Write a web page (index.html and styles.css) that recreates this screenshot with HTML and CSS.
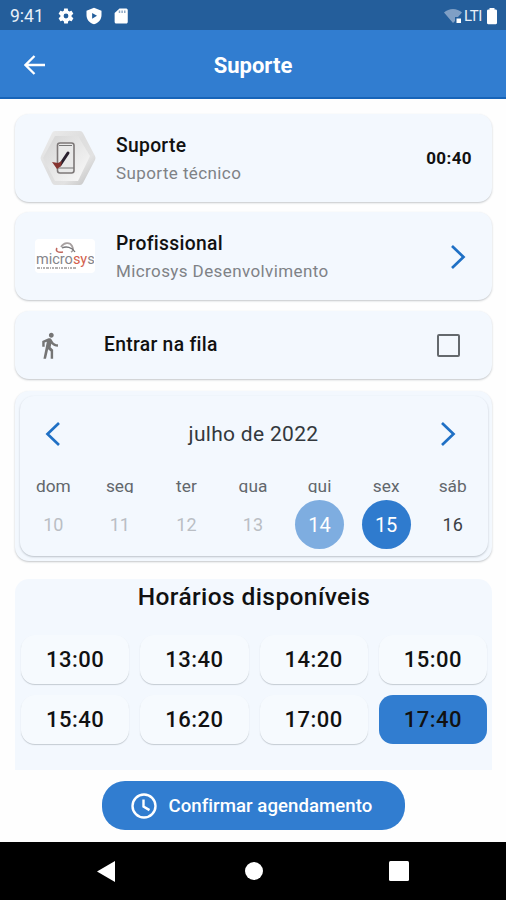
FILE: index.html
```
<!DOCTYPE html>
<html lang="pt-BR">
<head>
    <meta charset="UTF-8">
    <meta name="viewport" content="width=device-width, initial-scale=1.0">
    <title>Suporte</title>
    <link rel="stylesheet" href="styles.css">
</head>
<body>

    <div class="status-bar">
        <span class="clock">9:41</span>
        <svg class="status-icon" width="18" height="18" viewBox="0 0 24 24"><path fill="#fff" fill-rule="evenodd" d="M19.4 13c0-.3.1-.6.1-1s0-.7-.1-1l2.1-1.6c.2-.2.2-.4.1-.6l-2-3.5c-.1-.2-.4-.3-.6-.2l-2.500 1c-.5-.4-1.100-.7-1.700-1L14.400 2.400c0-.2-.2-.4-.5-.4h-4c-.2 0-.4.200-.5.400L9.100 5.100c-.6.200-1.200.600-1.700 1l-2.500-1c-.2-.1-.5 0-.6.200l-2 3.500c-.1.200-.1.500.1.600L4.500 11c0 .3-.1.600-.1 1s0 .7.1 1l-2.100 1.600c-.2.200-.2.400-.1.600l2 3.500c.1.200.4.300.6.200l2.500-1c.5.400 1.100.7 1.700 1l.4 2.700c0 .2.200.4.500.4h4c.2 0 .4-.2.500-.4l.4-2.700c.6-.2 1.200-.6 1.700-1l2.500 1c.2.100.5 0 .6-.2l2-3.500c.1-.2.100-.5-.1-.6L19.400 13zM12 15.200a3.200 3.200 0 1 1 0-6.400 3.200 3.200 0 0 1 0 6.400z"/></svg>
        <svg class="status-icon" width="18" height="18" viewBox="0 0 24 24"><path fill="#fff" fill-rule="evenodd" d="M12 1l10 4v6c0 5.600-4.200 10.700-10 12C6.200 21.700 2 16.600 2 11V5zM9.500 8v7.500l6.500-3.700z"/></svg>
        <svg class="status-icon" width="18" height="18" viewBox="0 0 24 24"><path fill="#fff" d="M18 2h-8L3.500 8v12c0 1.100.9 2 2 2H19c1.100 0 2-.9 2-2V4c0-1.100-.9-2-3-2z"/><path fill="#8fa9c6" d="M9 4.500h2V8H9zM12.500 4.500h2V8h-2zM16 4.500h2V8h-2z"/></svg>
        <div class="status-right">
            <svg width="19" height="16" viewBox="0 0 19 16"><path fill="#7f9fc5" d="M0 4.500C5-.2 13-.2 18 4.500l-4 4.500h-3v4l-2 2z"/><path fill="#fff" d="M12.500 10.500h4.500V15h-4.500z"/></svg>
            <span class="network">LTI</span>
            <svg width="12" height="18" viewBox="0 0 12 18"><path fill="#fff" d="M3.500 1h5v1.500h1c1 0 1.500.5 1.500 1.500v12c0 .7-.5 1.200-1.200 1.200H2.200C1.500 17.200 1 16.700 1 16V4c0-1 .5-1.500 1.500-1.500h1z"/></svg>
        </div>
    </div>

    <header class="app-bar">
        <svg width="22" height="20" viewBox="0 0 22 20"><path fill="none" stroke="#fff" stroke-width="2.300" d="M21 10H2M10.500 1L1.500 10l9 9"/></svg>
        <h1>Suporte</h1>
    </header>

    <main>
        <section class="card">
            <div class="thumb">
                <svg width="56" height="56" viewBox="0 0 56 56">
                    <defs>
                        <linearGradient id="hex" x1="0" y1="0" x2="1" y2="1">
                            <stop offset="0" stop-color="#ededed"/>
                            <stop offset=".45" stop-color="#dedede"/>
                            <stop offset=".7" stop-color="#e2e2e2"/>
                            <stop offset="1" stop-color="#bdbdbd"/>
                        </linearGradient>
                        <linearGradient id="hexInner" x1="0" y1="0" x2="1" y2="1">
                            <stop offset="0" stop-color="#d4d4d4"/>
                            <stop offset="1" stop-color="#fafafa"/>
                        </linearGradient>
                    </defs>
                    <path fill="url(#hex)" d="M15 1h25q2 0 3 2l12 23q1 2 0 4L43 53q-1 2-3 2H15q-2 0-3-2L1 30q-1-2 0-4L12 3q1-2 3-2z"/>
                    <path fill="url(#hexInner)" d="M15 6h23l12 20-12 25H15L3 28z"/>
                    <rect x="17.500" y="13" width="16.500" height="30" rx="2.500" fill="#e9e9e9" stroke="#7d7878" stroke-width="1.600"/>
                    <path fill="none" stroke="#777" stroke-width="1.200" d="M18 38h16M19 15.500h13"/>
                    <path fill="none" stroke="#29202e" stroke-width="3" stroke-linecap="round" d="M28 23l-8 12"/>
                    <path fill="#863430" d="M12 32l6 1 4-2-1 5-4 3z"/>
                </svg>
            </div>
            <div class="info">
                <h2>Suporte</h2>
                <p>Suporte técnico</p>
            </div>
            <span class="duration">00:40</span>
        </section>

        <section class="card">
            <div class="thumb logo">
                <svg width="58" height="32" viewBox="0 0 58 32">
                    <path fill="none" stroke="#a7a0a0" stroke-width="1.800" d="M25 7c3-5 9-5 11-1s1 5-1 6"/>
                    <path fill="none" stroke="#c0665c" stroke-width="1.500" d="M21 8c-2 3 1 5 6 4"/>
                    <path fill="none" stroke="#77777a" stroke-width="1.300" d="M26 8c4-2 10-1 13 4"/>
                    <text class="logo-name" x="0" y="24">micro<tspan fill="#d4604c">sy</tspan>s</text>
                    <path stroke="#9b9696" stroke-width="1.300" stroke-dasharray="3 1 1 1 2 1" d="M1 28h40"/>
                </svg>
            </div>
            <div class="info">
                <h2>Profissional</h2>
                <p>Microsys Desenvolvimento</p>
            </div>
            <svg class="chevron" width="16" height="26" viewBox="0 0 16 26"><path d="M2 2l11.500 11L2 24"/></svg>
        </section>

        <section class="card queue">
            <svg class="walk" width="29" height="29" viewBox="0 0 24 24"><path fill="#757575" d="M13.500 5.500c1.100 0 2-.9 2-2s-.9-2-2-2-2 .9-2 2 .9 2 2 2zM9.800 8.900L7 23h2.100l1.800-8 2.100 2v6h2v-7.500l-2.100-2 .6-3C14.800 12 16.800 13 19 13v-2c-1.900 0-3.500-1-4.300-2.400l-1-1.600c-.4-.6-1-1-1.700-1-.3 0-.5.100-.8.100L6 8.300V13h2V9.600l1.800-.7"/></svg>
            <h2>Entrar na fila</h2>
            <span class="checkbox"></span>
        </section>

        <section class="calendar">
            <div class="calendar-inner">
                <div class="month">
                    <svg class="chevron" width="16" height="26" viewBox="0 0 16 26"><path d="M14 2L2.500 13 14 24"/></svg>
                    <span>julho de 2022</span>
                    <svg class="chevron" width="16" height="26" viewBox="0 0 16 26"><path d="M2 2l11.500 11L2 24"/></svg>
                </div>
                <div class="week names">
                    <span>dom</span>
                    <span>seg</span>
                    <span>ter</span>
                    <span>qua</span>
                    <span>qui</span>
                    <span>sex</span>
                    <span>sáb</span>
                </div>
                <div class="week days">
                    <span class="past">10</span>
                    <span class="past">11</span>
                    <span class="past">12</span>
                    <span class="past">13</span>
                    <span class="today">14</span>
                    <span class="selected">15</span>
                    <span>16</span>
                </div>
            </div>
        </section>

        <section class="times">
            <h3>Horários disponíveis</h3>
            <div class="slots">
                <button>13:00</button>
                <button>13:40</button>
                <button>14:20</button>
                <button>15:00</button>
                <button>15:40</button>
                <button>16:20</button>
                <button>17:00</button>
                <button class="active">17:40</button>
            </div>
        </section>
    </main>

    <div class="footer">
        <button class="confirm">
            <svg width="26" height="26" viewBox="0 0 26 26"><path fill="none" stroke="#fff" stroke-width="2.400" d="M13 1.500a11.500 11.500 0 1 0 0 23 11.500 11.500 0 0 0 0-23zM12.500 6.500v7l6 3.600"/></svg>
            <span>Confirmar agendamento</span>
        </button>
    </div>

    <nav class="nav-bar">
        <svg width="18" height="21" viewBox="0 0 18 21"><path fill="#fff" d="M0 10.500L18 0v21z"/></svg>
        <svg width="18" height="18" viewBox="0 0 18 18"><circle fill="#fff" cx="9" cy="9" r="9"/></svg>
        <svg width="20" height="20" viewBox="0 0 20 20"><rect fill="#fff" width="20" height="20" rx="1.500"/></svg>
    </nav>

</body>
</html>
```
FILE: styles.css
```
* {
    box-sizing: border-box;
}
body {
    margin: 0;
    height: 900px;
    display: flex;
    flex-direction: column;
    font-family: Roboto, sans-serif;
    background: #fefefe;
    color: #111;
    overflow: hidden;
}
h1, h2, h3, p {
    margin: 0;
}
button {
    font-family: inherit;
    border: none;
    padding: 0;
}
svg {
    display: block;
    flex: none;
}

.status-bar {
    height: 30px;
    flex: none;
    display: flex;
    align-items: center;
    padding: 1px 8px 0 10px;
    background: #245e9b;
    color: #e8f0f8;
}
.clock {
    width: 47px;
    font-size: 17.5px;
}
.status-icon {
    margin-right: 9.5px;
}
.status-right {
    margin-left: auto;
    display: flex;
    align-items: center;
}
.network {
    width: 20px;
    margin: 0 2px 0 1px;
    font-size: 15px;
    letter-spacing: -.4px;
}

.app-bar {
    height: 69px;
    flex: none;
    display: flex;
    align-items: center;
    padding: 2px 24px 0;
    background: #317dd0;
    border-bottom: 2px solid #1764b8;
    color: #fff;
}
.app-bar h1 {
    flex: 1;
    margin-right: 22px;
    padding-top: 1px;
    text-align: center;
    font-size: 22px;
    font-weight: 700;
}

main {
    flex: none;
    height: 671px;
    padding: 15px 14px 0 15px;
}
.card, .calendar, .calendar-inner {
    background: #f3f8fe;
    border-radius: 14px;
    box-shadow: 0 1px 2px rgba(60, 70, 80, .3);
}
.card {
    height: 88px;
    margin-bottom: 10px;
    display: flex;
    align-items: center;
    padding: 0 20px;
}
.thumb {
    width: 60px;
    margin-right: 21px;
    display: flex;
    justify-content: center;
    padding-left: 6px;
}
.logo {
    height: 34px;
    padding: 0;
    align-items: center;
    background: #fff;
    border-radius: 4px;
}
.logo-name {
    font-size: 14.5px;
    font-weight: 400;
    fill: #85858a;
}
.info {
    flex: 1;
    padding-top: 2px;
}
h2 {
    font-size: 19.3px;
    font-weight: 500;
    line-height: 28px;
    letter-spacing: .3px;
}
.info p {
    font-size: 17px;
    line-height: 27px;
    letter-spacing: .4px;
    color: #7f8286;
}
.duration {
    font-size: 17px;
    font-weight: 700;
    letter-spacing: .4px;
}
.chevron path {
    fill: none;
    stroke: #1f70c5;
    stroke-width: 2.7;
}
.card .chevron {
    margin: 1px 6px 0 0;
}
.queue {
    height: 68px;
    margin: 11px 0 12px;
}
.walk {
    margin-right: 40px;
}
.queue h2 {
    flex: 1;
}
.checkbox {
    width: 23px;
    height: 23px;
    margin-right: 12px;
    border: 2px solid #64696d;
    border-radius: 2px;
}

.calendar {
    height: 170px;
    margin-bottom: 18px;
    padding: 5px 4px 5px 5px;
}
.calendar-inner {
    height: 160px;
    box-shadow: 0 1px 2px rgba(60, 70, 80, .3);
}
.month {
    height: 75px;
    display: flex;
    align-items: center;
    justify-content: space-between;
    padding: 0 32px 0 25px;
    font-size: 21px;
    letter-spacing: .3px;
    color: #33383d;
}
.month span {
    margin-left: 6px;
}
.week {
    display: grid;
    grid-template-columns: repeat(7, 1fr);
    justify-items: center;
    padding-right: 2px;
    text-align: center;
}
.names {
    height: 22px;
    line-height: 30px;
    font-size: 17.3px;
    color: #62676c;
    overflow: hidden;
}
.days {
    margin-top: 7px;
    line-height: 50px;
    font-size: 18px;
    color: #3b4045;
}
.days span {
    width: 49px;
    height: 49px;
}
.days .past {
    color: #babec4;
}
.days .today, .days .selected {
    background: #7eade0;
    border-radius: 50%;
    color: #fff;
    font-size: 20px;
}
.days .selected {
    background: #2f7bce;
}

.times {
    height: 191px;
    padding: 0 5px 0 6px;
    background: #f3f8fe;
    border-radius: 14px 14px 0 0;
}
.times h3 {
    height: 56px;
    line-height: 35px;
    text-align: center;
    font-size: 24.5px;
    font-weight: 500;
    letter-spacing: .4px;
}
.slots {
    display: grid;
    grid-template-columns: repeat(4, 1fr);
    gap: 11px;
}
.slots button {
    height: 49px;
    padding-bottom: 1px;
    background: #f6fafe;
    border-radius: 14px;
    box-shadow: 0 1px 1px rgba(60, 70, 80, .25);
    font-size: 22px;
    font-weight: 500;
    letter-spacing: .5px;
    color: #111;
}
.slots .active {
    background: #317dd0;
    box-shadow: none;
}

.footer {
    height: 72px;
    flex: none;
    padding-top: 11px;
    display: flex;
    justify-content: center;
}
.confirm {
    width: 303px;
    height: 49px;
    display: flex;
    align-items: center;
    gap: 12px;
    padding-left: 29px;
    background: #317dd0;
    border-radius: 23px;
    font-size: 18.6px;
    font-weight: 500;
    letter-spacing: .05px;
    color: #fff;
}

.nav-bar {
    flex: 1;
    display: flex;
    align-items: center;
    justify-content: space-between;
    padding: 0 97px;
    background: #000;
}
.nav-bar svg:nth-child(2) {
    margin-left: 3px;
}
```
